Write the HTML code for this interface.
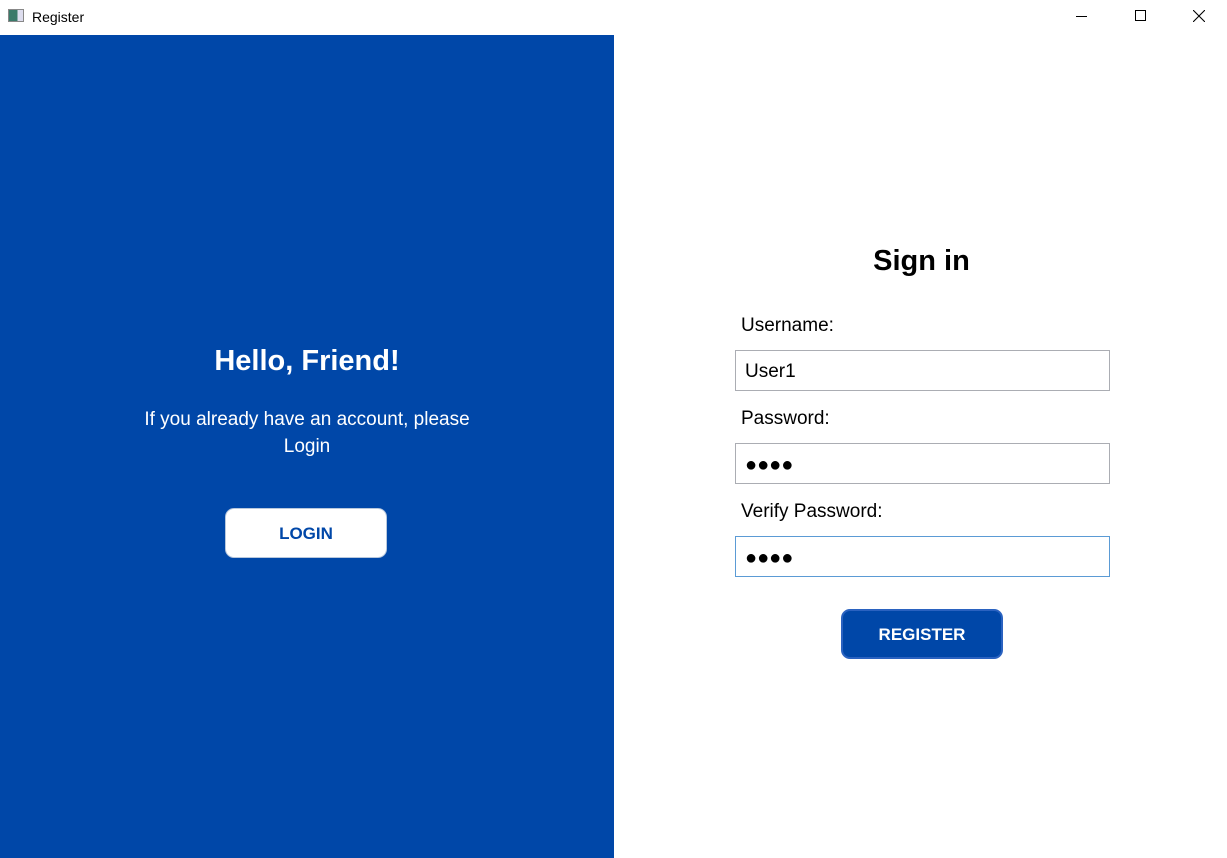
<!DOCTYPE html>
<html><head><style>
body{margin:0;width:1227px;height:858px;position:relative;background:#fff;font-family:"Liberation Sans",sans-serif;overflow:hidden}
.a{position:absolute}
.t{white-space:nowrap}
.inp{position:absolute;left:735px;width:375px;height:41px;border:1px solid #abadb3;background:#fff;box-sizing:border-box}
.lbl{position:absolute;left:741px;font-size:19px;color:#000}
.dots{position:absolute;left:9px;top:10px;font-size:20px}
</style></head><body>
<div class="a" style="left:8px;top:9px;width:16px;height:13px;border:1px solid #888;box-sizing:border-box;background:linear-gradient(90deg,#3a7a6a 0 60%,#dde 60%)"></div>
<div class="a t" style="left:32px;top:9px;font-size:14px">Register</div>
<div class="a" style="left:1076px;top:16px;width:11px;height:1px;background:#000"></div>
<div class="a" style="left:1135px;top:10px;width:11px;height:11px;border:1px solid #000;box-sizing:border-box"></div>
<svg class="a" style="left:1193px;top:10px" width="12" height="12"><path d="M0 0L12 12M12 0L0 12" stroke="#000" stroke-width="1.1"/></svg>
<div class="a" style="left:0;top:35px;width:614px;height:823px;background:#0047a8"></div>
<div class="a t" style="left:0;width:614px;top:345px;text-align:center;color:#fff;font-weight:bold;font-size:29px">Hello, Friend!</div>
<div class="a" style="left:0;width:614px;top:406px;text-align:center;color:#fff;font-size:19px;line-height:27px">If you already have an account, please<br>Login</div>
<div class="a" style="left:225px;top:508px;width:162px;height:50px;background:#fff;border:1px solid #b8c8dd;border-radius:9px;box-sizing:border-box;text-align:center;line-height:50px;color:#0047a8;font-weight:bold;font-size:17px">LOGIN</div>
<div class="a t" style="left:614px;width:615px;top:245px;text-align:center;font-weight:bold;font-size:29px">Sign in</div>
<div class="lbl" style="top:315px">Username:</div>
<div class="inp" style="top:350px"><span class="a" style="left:9px;top:10px;font-size:19px">User1</span></div>
<div class="lbl" style="top:408px">Password:</div>
<div class="inp" style="top:443px"><span class="dots">●●●●</span></div>
<div class="lbl" style="top:501px">Verify Password:</div>
<div class="inp" style="top:536px;border-color:#5b9bd5"><span class="dots">●●●●</span></div>
<div class="a" style="left:841px;top:609px;width:162px;height:50px;background:#0047a8;border:2px solid #2a62c0;border-radius:9px;box-sizing:border-box;text-align:center;line-height:48px;color:#fff;font-weight:bold;font-size:17px">REGISTER</div>
</body></html>
